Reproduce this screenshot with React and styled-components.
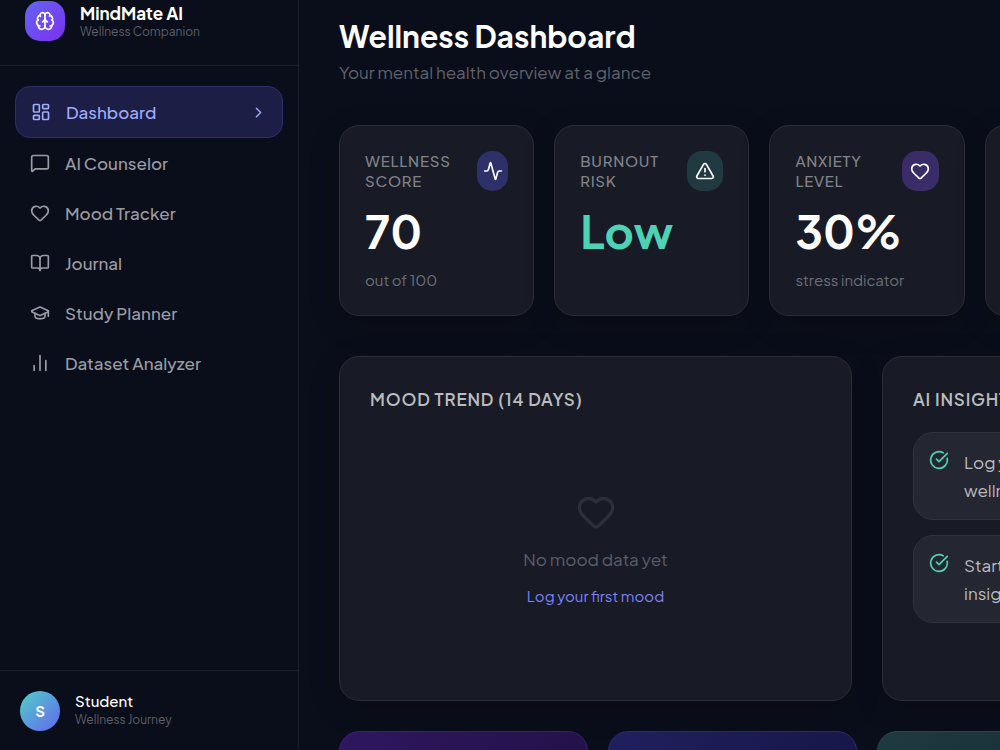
import styled, { createGlobalStyle } from "styled-components";
import {
  Activity,
  BookOpen,
  Brain,
  ChartNoAxesColumn,
  ChevronRight,
  CircleCheckBig,
  GraduationCap,
  Heart,
  LayoutDashboard,
  MessageSquare,
  Moon,
  TriangleAlert,
  Zap,
} from "lucide-react";

const GlobalStyle = createGlobalStyle`
  *,
  *::before,
  *::after {
    box-sizing: border-box;
  }

  body {
    margin: 0;
    color: #ffffff;
    background-color: #0a0e1a;
    font-family: "Plus Jakarta Sans", Inter, sans-serif;
    -webkit-font-smoothing: antialiased;
  }

  h1, h2, p {
    margin: 0;
  }

  a {
    text-decoration: none;
  }
`;

const Layout = styled.div`
  display: flex;
  height: 100vh;
`;

const Sidebar = styled.aside`
  display: flex;
  flex-direction: column;
  flex: none;
  width: 299px;
  border-right: 1px solid #1b1f2b;
`;

const Brand = styled.div`
  display: flex;
  align-items: flex-end;
  gap: 15px;
  padding: 1px 25px 24px;
  border-bottom: 1px solid #1b1f2b;
`;

const Logo = styled.div`
  display: grid;
  place-items: center;
  width: 40px;
  height: 40px;
  border-radius: 15px;
  background: linear-gradient(135deg, #6366f1, #7c2fef);
`;

const BrandName = styled.p`
  font-size: 17px;
  font-weight: 700;
  line-height: 20px;
`;

const Caption = styled.p`
  color: #5c5f69;
  font-size: 12px;
  line-height: 18px;
`;

const Nav = styled.nav`
  flex: 1;
  padding: 20px 15px;
`;

const NavItem = styled.a`
  display: flex;
  align-items: center;
  gap: 15px;
  padding: 12px 15px;
  border-radius: 15px;
  color: ${({ $active }) => ($active ? "#a0abf8" : "#9a9ca2")};
  font-size: 17px;
  font-weight: 500;
  line-height: 26px;
  ${({ $active }) =>
    $active &&
    `
    border: 1px solid #2d2f70;
    background-color: #1c1e46;
  `}

  span {
    flex: 1;
  }
`;

const Profile = styled.div`
  display: flex;
  gap: 15px;
  height: 80px;
  padding: 20px 20px 0;
  border-top: 1px solid #1b1f2b;
`;

const Avatar = styled.div`
  display: grid;
  place-items: center;
  width: 40px;
  height: 40px;
  border-radius: 50%;
  background: linear-gradient(135deg, #4fd1c5, #6366f1);
  font-size: 15px;
  font-weight: 700;
  line-height: 20px;
`;

const ProfileName = styled.p`
  font-size: 15px;
  font-weight: 500;
  line-height: 20px;
`;

const Main = styled.main`
  flex: 1;
  min-width: 0;
  padding: 15px 40px 40px;
  overflow: auto;
  scrollbar-width: none;
`;

const Content = styled.div`
  min-width: 1056px;
`;

const Title = styled.h1`
  margin-bottom: 2px;
  font-size: 30px;
  font-weight: 700;
  line-height: 43px;
`;

const Subtitle = styled.p`
  color: #5f626b;
  font-size: 17px;
  line-height: 25px;
`;

const Row = styled.div`
  display: grid;
  grid-template-columns: repeat(${({ $cols }) => $cols}, minmax(0, 1fr));
  gap: ${({ $gap }) => $gap || 20}px;
  margin-top: ${({ $top }) => $top}px;
`;

const Card = styled.section`
  padding: ${({ $pad }) => $pad}px;
  border: 1px solid #2b2e39;
  border-radius: 20px;
  background-color: #181b26;
  box-shadow: 0 8px 32px rgba(0, 0, 0, 0.15);
`;

const StatTop = styled.div`
  display: flex;
  justify-content: space-between;
`;

const StatLabel = styled.h2`
  color: #818389;
  font-size: 15px;
  font-weight: 500;
  letter-spacing: 0.05em;
  line-height: 20px;
  text-transform: uppercase;
`;

const StatIcon = styled.div`
  display: flex;
  align-items: center;
  justify-content: center;
  width: 40px;
  height: 40px;
  border-radius: 15px;
  background-color: ${({ $bg }) => $bg};

  svg {
    flex: none;
  }
`;

const StatValue = styled.p`
  margin: 15px 0 14px;
  color: ${({ $color }) => $color || "#ffffff"};
  font-size: 45px;
  font-weight: 700;
  line-height: 50px;
`;

const StatNote = styled.p`
  color: #6c6f77;
  font-size: 15px;
  line-height: 20px;
`;

const PanelTitle = styled.h2`
  margin-bottom: 20px;
  color: #babbbe;
  font-size: 17px;
  font-weight: 600;
  letter-spacing: 0.05em;
  line-height: 25px;
  text-transform: uppercase;
`;

const EmptyState = styled.div`
  display: flex;
  flex-direction: column;
  align-items: center;
  justify-content: center;
  gap: 15px;
  min-height: 238px;
  padding-bottom: 5px;
  color: #5b5e67;
  font-size: 17px;
  line-height: 25px;

  svg {
    color: #2c2f39;
  }
`;

const TextLink = styled.a`
  color: #7c83f5;
  font-size: 15px;
  line-height: 18px;
`;

const InsightList = styled.ul`
  display: flex;
  flex-direction: column;
  gap: 15px;
  margin: 0;
  padding: 0;
  list-style: none;
`;

const Insight = styled.li`
  display: flex;
  gap: 15px;
  padding: 15px;
  border: 1px solid #30333d;
  border-radius: 20px;
  background-color: #242731;
  color: #babbbe;
  font-size: 17px;
  line-height: 28px;

  svg {
    flex: none;
    margin-top: 2px;
    color: #4fd1b5;
  }
`;

const Shortcut = styled.a`
  min-height: 140px;
  padding: 25px;
  border: 1px solid ${({ $border }) => $border};
  border-radius: 20px;
  background: linear-gradient(135deg, ${({ $from }) => $from}, ${({ $to }) => $to});
  color: #ffffff;
  font-size: 17px;
  line-height: 25px;
`;

const navItems = [
  { label: "Dashboard", icon: LayoutDashboard, active: true },
  { label: "AI Counselor", icon: MessageSquare },
  { label: "Mood Tracker", icon: Heart },
  { label: "Journal", icon: BookOpen },
  { label: "Study Planner", icon: GraduationCap },
  { label: "Dataset Analyzer", icon: ChartNoAxesColumn },
];

const stats = [
  { label: "Wellness Score", value: "70", note: "out of 100", icon: Activity, bg: "#2e3069" },
  { label: "Burnout Risk", value: "Low", icon: TriangleAlert, bg: "#213a41", color: "#4fd1b5" },
  { label: "Anxiety Level", value: "30%", note: "stress indicator", icon: Heart, bg: "#3a2c69" },
  { label: "Sleep Quality", value: "--", note: "last night", icon: Moon, bg: "#2e3069" },
  { label: "Day Streak", value: "0", note: "days in a row", icon: Zap, bg: "#213a41" },
];

const insights = [
  "Log your mood daily to receive personalized wellness insights.",
  "Start a journal entry this week to unlock more insights.",
];

const shortcuts = [
  { label: "Talk to AI", from: "#2f1760", to: "#1e0f40", border: "#3d1f74" },
  { label: "Log Mood", from: "#20205f", to: "#14123f", border: "#2a2a70" },
  { label: "Write Journal", from: "#1f3b40", to: "#14222f", border: "#24484c" },
  { label: "Plan Study", from: "#2f1760", to: "#1e0f40", border: "#3d1f74" },
];

const StatCard = ({ label, value, note, icon: Icon, bg, color }) => (
  <Card $pad={25}>
    <StatTop>
      <StatLabel>{label}</StatLabel>
      <StatIcon $bg={bg}>
        <Icon size={20} />
      </StatIcon>
    </StatTop>
    <StatValue $color={color}>{value}</StatValue>
    {note ? <StatNote>{note}</StatNote> : null}
  </Card>
);

const App = () => {
  return (
    <>
      <GlobalStyle />
      <Layout>
        <Sidebar>
          <Brand>
            <Logo>
              <Brain size={20} />
            </Logo>
            <div>
              <BrandName>MindMate AI</BrandName>
              <Caption>Wellness Companion</Caption>
            </div>
          </Brand>
          <Nav>
            {navItems.map(({ label, icon: Icon, active }) => (
              <NavItem key={label} href="#" $active={active}>
                <Icon size={20} />
                <span>{label}</span>
                {active ? <ChevronRight size={17} /> : null}
              </NavItem>
            ))}
          </Nav>
          <Profile>
            <Avatar>S</Avatar>
            <div>
              <ProfileName>Student</ProfileName>
              <Caption>Wellness Journey</Caption>
            </div>
          </Profile>
        </Sidebar>

        <Main>
          <Content>
            <Title>Wellness Dashboard</Title>
            <Subtitle>Your mental health overview at a glance</Subtitle>

            <Row $cols={5} $top={40}>
              {stats.map((stat) => (
                <StatCard key={stat.label} {...stat} />
              ))}
            </Row>

            <Row $cols={2} $gap={30} $top={40}>
              <Card $pad={30}>
                <PanelTitle>Mood Trend (14 days)</PanelTitle>
                <EmptyState>
                  <Heart size={40} />
                  <p>No mood data yet</p>
                  <TextLink href="#">Log your first mood</TextLink>
                </EmptyState>
              </Card>
              <Card $pad={30}>
                <PanelTitle>AI Insights</PanelTitle>
                <InsightList>
                  {insights.map((text) => (
                    <Insight key={text}>
                      <CircleCheckBig size={20} />
                      <p>{text}</p>
                    </Insight>
                  ))}
                </InsightList>
              </Card>
            </Row>

            <Row $cols={4} $top={30}>
              {shortcuts.map(({ label, from, to, border }) => (
                <Shortcut key={label} href="#" $from={from} $to={to} $border={border}>
                  {label}
                </Shortcut>
              ))}
            </Row>
          </Content>
        </Main>
      </Layout>
    </>
  );
};

export default App;
